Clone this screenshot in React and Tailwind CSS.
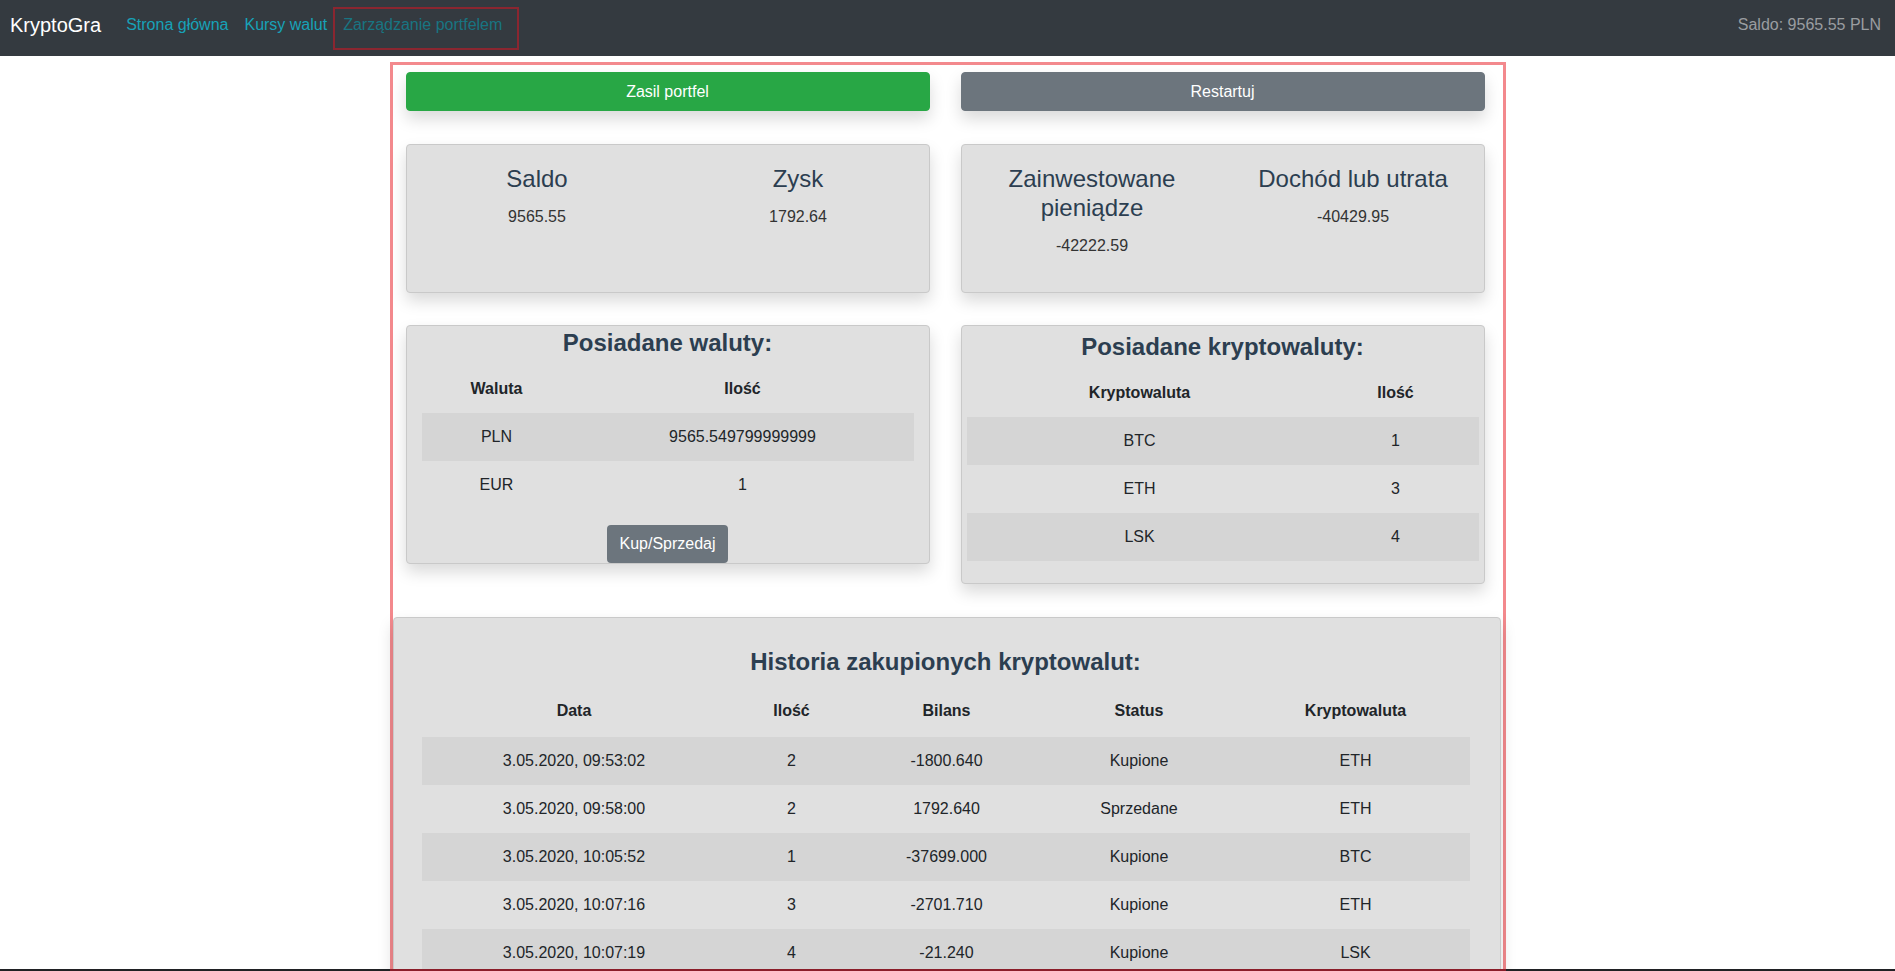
import React from "react";

const font = { fontFamily: '"Liberation Sans", Arial, sans-serif' };

const cryptoRows = [
  ["BTC", "1"],
  ["ETH", "3"],
  ["LSK", "4"],
];

const history = [
  ["3.05.2020, 09:53:02", "2", "-1800.640", "Kupione", "ETH"],
  ["3.05.2020, 09:58:00", "2", "1792.640", "Sprzedane", "ETH"],
  ["3.05.2020, 10:05:52", "1", "-37699.000", "Kupione", "BTC"],
  ["3.05.2020, 10:07:16", "3", "-2701.710", "Kupione", "ETH"],
  ["3.05.2020, 10:07:19", "4", "-21.240", "Kupione", "LSK"],
];

const card =
  "bg-[#e0e0e0] border border-[#c9c9c9] rounded-[4px] shadow-[0_8px_16px_rgba(0,0,0,0.15)]";

const Stat = ({ title, value }) => (
  <div className="px-[15px] text-center">
    <h4 className="text-[24px] leading-[1.2] mb-[11px] text-[#2c3e50]">{title}</h4>
    <p className="text-[16px] leading-6 mb-4 text-[#333]">{value}</p>
  </div>
);

const App = () => {
  return (
    <div className="min-h-screen bg-white text-[#212529]" style={font}>
      {/* navbar */}
      <nav className="h-[56px] bg-[#343a40] flex items-center px-[10px]">
        <span className="text-[20px] leading-7 text-white mb-[6px] mr-[17px]">KryptoGra</span>
        <a className="px-2 text-[16px] leading-6 text-[#17a2b8] mb-[6px]">Strona główna</a>
        <a className="pl-2 pr-[6px] text-[16px] leading-6 text-[#17a2b8] mb-[6px]">Kursy walut</a>
        <div className="h-[43px] flex items-center border-2 border-[#8b2630] pl-[8px] pr-[15px] pb-[7px]">
          <span className="text-[16px] leading-6 text-[#187582]">Zarządzanie portfelem</span>
        </div>
        <span className="ml-auto mr-[4px] mb-[6px] text-[16px] leading-6 text-[#9a9da0]">
          Saldo: 9565.55 PLN
        </span>
      </nav>

      <div className="mt-[6px] mx-auto w-[1116px] border-[3px] border-[#f3898d]">
        <div className="grid grid-cols-2 gap-x-[31px] pl-[13px] pr-[18px] pt-[7px]">
          <button className="h-[39px] rounded-[4px] bg-[#28a745] border border-[#28a745] text-white text-[16px] shadow-[0_8px_16px_rgba(0,0,0,0.15)]">
            Zasil portfel
          </button>
          <button className="h-[39px] rounded-[4px] bg-[#6c757d] border border-[#6c757d] text-white text-[16px] shadow-[0_8px_16px_rgba(0,0,0,0.15)]">
            Restartuj
          </button>

          <div className={`${card} mt-[33px] pt-[20px] pb-[18px] grid grid-cols-2`}>
            <Stat title="Saldo" value="9565.55" />
            <Stat title="Zysk" value="1792.64" />
          </div>
          <div className={`${card} mt-[33px] pt-[20px] pb-[18px] grid grid-cols-2`}>
            <Stat title="Zainwestowane pieniądze" value="-42222.59" />
            <Stat title="Dochód lub utrata" value="-40429.95" />
          </div>

          {/* owned currencies */}
          <div className={`${card} mt-[32px] self-start pt-[3px] px-[15px] flex flex-col items-center`}>
            <h4 className="text-[24px] leading-[1.2] font-bold mb-2 text-[#2c3e50]">Posiadane waluty:</h4>
            <table className="w-full text-[16px] text-center mb-4">
              <thead>
                <tr className="h-[48px]">
                  <th className="w-[150px] font-bold">Waluta</th>
                  <th className="font-bold">Ilość</th>
                </tr>
              </thead>
              <tbody>
                <tr className="h-[48px] bg-[#d5d5d5]">
                  <td>PLN</td>
                  <td>9565.549799999999</td>
                </tr>
                <tr className="h-[48px]">
                  <td>EUR</td>
                  <td>1</td>
                </tr>
              </tbody>
            </table>
            <button className="h-[38px] px-3 rounded-[4px] bg-[#6c757d] text-white text-[16px] leading-6">
              Kup/Sprzedaj
            </button>
          </div>

          {/* owned crypto */}
          <div className={`${card} mt-[32px] self-start pt-[7px] pb-[22px] px-[5px] flex flex-col items-center`}>
            <h4 className="text-[24px] leading-[1.2] font-bold mb-2 text-[#2c3e50]">Posiadane kryptowaluty:</h4>
            <table className="w-full text-[16px] text-center">
              <thead>
                <tr className="h-[48px]">
                  <th className="w-[346px] font-bold">Kryptowaluta</th>
                  <th className="font-bold">Ilość</th>
                </tr>
              </thead>
              <tbody>
                {cryptoRows.map((r, i) => (
                  <tr key={r[0]} className={`h-[48px] ${i % 2 === 0 ? "bg-[#d5d5d5]" : ""}`}>
                    <td>{r[0]}</td>
                    <td>{r[1]}</td>
                  </tr>
                ))}
              </tbody>
            </table>
          </div>
        </div>

        {/* history */}
        <div className={`${card} mt-[33px] mr-[2px] pt-[30px] pb-[30px] pl-[28px] pr-[30px] flex flex-col items-center`}>
          <h4 className="text-[24px] leading-[1.2] font-bold mb-2 text-[#2c3e50]">
            Historia zakupionych kryptowalut:
          </h4>
          <table className="w-full text-[16px] text-center">
            <thead>
              <tr className="h-[52px]">
                <th className="w-[305px] font-bold">Data</th>
                <th className="w-[130px] font-bold">Ilość</th>
                <th className="w-[180px] font-bold">Bilans</th>
                <th className="w-[205px] font-bold">Status</th>
                <th className="font-bold">Kryptowaluta</th>
              </tr>
            </thead>
            <tbody>
              {history.map((r, i) => (
                <tr key={r[0]} className={`h-[48px] ${i % 2 === 0 ? "bg-[#d5d5d5]" : ""}`}>
                  {r.map((c, j) => (
                    <td key={j}>{c}</td>
                  ))}
                </tr>
              ))}
            </tbody>
          </table>
        </div>
      </div>

      {/* bottom edge of the window */}
      <div className="fixed bottom-0 left-0 w-full h-[2px] flex">
        <div className="w-[390px] bg-[#202124]" />
        <div className="w-[1116px] bg-[#8b1e2a]" />
        <div className="flex-1 bg-[#202124]" />
      </div>
    </div>
  );
};

export default App;
